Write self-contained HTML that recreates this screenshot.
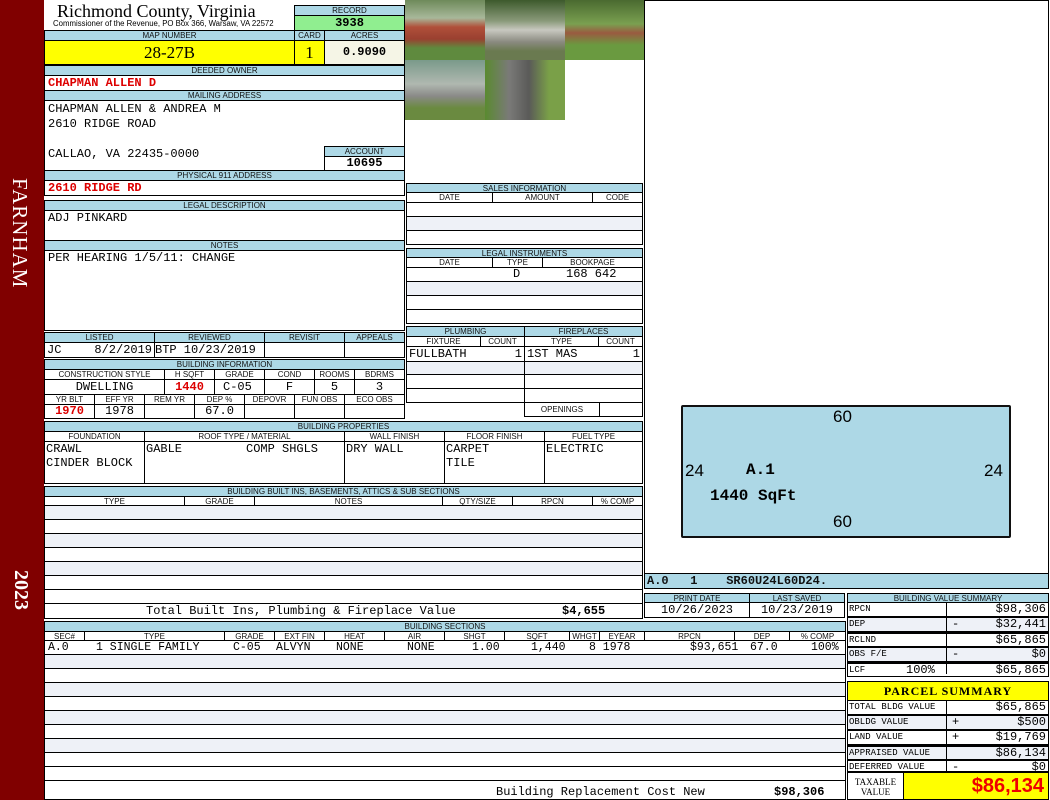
<!DOCTYPE html>
<html><head><meta charset="utf-8"><style>
*{margin:0;padding:0;box-sizing:border-box}
body{width:1050px;height:800px;position:relative;background:#fff;overflow:hidden;font-family:"Liberation Sans",sans-serif}
.c{position:absolute;border:1px solid #000;background:#fff;overflow:hidden;white-space:nowrap}
.l{position:absolute;border:1px solid #000;background:#add8e6;font-size:8px;text-align:center;line-height:9px;overflow:hidden;white-space:nowrap;color:#111}
.m{font-family:"Liberation Mono",monospace;font-size:12px}
.r{color:#d00;font-weight:bold}
.a{background:#eef1f7}
.t{position:absolute;white-space:nowrap}
</style></head><body>
<div style="position:absolute;left:0;top:0;width:44px;height:800px;background:#800000"></div>
<div class="t" style="left:32px;top:178px;transform:rotate(90deg);transform-origin:0 0;color:#fff;font-family:'Liberation Serif',serif;font-size:21px;letter-spacing:1px">FARNHAM</div>
<div class="t" style="left:32px;top:570px;transform:rotate(90deg);transform-origin:0 0;color:#fff;font-family:'Liberation Serif',serif;font-size:20px;font-weight:bold">2023</div>

<div class="t" style="left:57px;top:1px;font-family:'Liberation Serif',serif;font-size:18px">Richmond County, Virginia</div>
<div class="t" style="left:53px;top:19px;font-size:7.8px">Commissioner of the Revenue, PO Box 366, Warsaw, VA 22572</div>
<div class="l" style="left:294px;top:5px;width:111px;height:11px">RECORD</div>
<div class="c m" style="left:294px;top:15px;width:111px;height:16px;background:#90ee90;text-align:center;font-weight:bold;line-height:14px">3938</div>
<div class="l" style="left:44px;top:30px;width:251px;height:11px">MAP NUMBER</div>
<div class="l" style="left:294px;top:30px;width:31px;height:11px">CARD</div>
<div class="l" style="left:324px;top:30px;width:81px;height:11px">ACRES</div>
<div class="c" style="left:44px;top:40px;width:251px;height:25px;background:#ffff00;text-align:center;font-family:'Liberation Serif',serif;font-size:17px;line-height:23px">28-27B</div>
<div class="c" style="left:294px;top:40px;width:31px;height:25px;background:#ffff00;text-align:center;font-family:'Liberation Serif',serif;font-size:17px;line-height:23px">1</div>
<div class="c m" style="left:324px;top:40px;width:81px;height:25px;background:#f5f5e6;text-align:center;font-weight:bold;line-height:23px">0.9090</div>
<div class="l" style="left:44px;top:65px;width:361px;height:11px">DEEDED OWNER</div>
<div class="c m r" style="left:44px;top:75px;width:361px;height:16px;padding-left:3px;line-height:14px">CHAPMAN ALLEN D</div>
<div class="l" style="left:44px;top:90px;width:361px;height:11px">MAILING ADDRESS</div>
<div class="c m" style="left:44px;top:100px;width:361px;height:71px;padding:1px 3px;line-height:15px">CHAPMAN ALLEN &amp; ANDREA M<br>2610 RIDGE ROAD<br><br>CALLAO, VA 22435-0000</div>
<div class="l" style="left:324px;top:146px;width:81px;height:11px">ACCOUNT</div>
<div class="c m" style="left:324px;top:156px;width:81px;height:15px;text-align:center;font-weight:bold;line-height:13px">10695</div>
<div class="l" style="left:44px;top:170px;width:361px;height:11px">PHYSICAL 911 ADDRESS</div>
<div class="c m r" style="left:44px;top:180px;width:361px;height:16px;padding-left:3px;line-height:14px">2610 RIDGE RD</div>
<div class="l" style="left:44px;top:200px;width:361px;height:11px">LEGAL DESCRIPTION</div>
<div class="c m" style="left:44px;top:210px;width:361px;height:31px;padding-left:3px;line-height:15px">ADJ PINKARD</div>
<div class="l" style="left:44px;top:240px;width:361px;height:11px">NOTES</div>
<div class="c m" style="left:44px;top:250px;width:361px;height:81px;padding-left:3px;line-height:15px">PER HEARING 1/5/11: CHANGE</div>

<div class="l" style="left:44px;top:332px;width:111px;height:11px">LISTED</div>
<div class="l" style="left:154px;top:332px;width:111px;height:11px">REVIEWED</div>
<div class="l" style="left:264px;top:332px;width:81px;height:11px">REVISIT</div>
<div class="l" style="left:344px;top:332px;width:61px;height:11px">APPEALS</div>
<div class="c m" style="left:44px;top:342px;width:111px;height:16px;padding:0 2px;line-height:14px">JC<span style="float:right">8/2/2019</span></div>
<div class="c m" style="left:154px;top:342px;width:111px;height:16px;line-height:14px">BTP 10/23/2019</div>
<div class="c" style="left:264px;top:342px;width:81px;height:16px"></div>
<div class="c" style="left:344px;top:342px;width:61px;height:16px"></div>
<div class="l" style="left:44px;top:359px;width:361px;height:11px">BUILDING INFORMATION</div>
<div class="l" style="left:44px;top:369px;width:121px;height:11px;background:#fff">CONSTRUCTION STYLE</div>
<div class="l" style="left:164px;top:369px;width:51px;height:11px;background:#fff">H SQFT</div>
<div class="l" style="left:214px;top:369px;width:51px;height:11px;background:#fff">GRADE</div>
<div class="l" style="left:264px;top:369px;width:51px;height:11px;background:#fff">COND</div>
<div class="l" style="left:314px;top:369px;width:41px;height:11px;background:#fff">ROOMS</div>
<div class="l" style="left:354px;top:369px;width:51px;height:11px;background:#fff">BDRMS</div>
<div class="c m" style="left:44px;top:379px;width:121px;height:16px;text-align:center;line-height:14px">DWELLING</div>
<div class="c m r" style="left:164px;top:379px;width:51px;height:16px;text-align:center;line-height:14px">1440</div>
<div class="c m" style="left:214px;top:379px;width:51px;height:16px;padding-left:8px;line-height:14px">C-05</div>
<div class="c m" style="left:264px;top:379px;width:51px;height:16px;text-align:center;line-height:14px">F</div>
<div class="c m" style="left:314px;top:379px;width:41px;height:16px;text-align:center;line-height:14px">5</div>
<div class="c m" style="left:354px;top:379px;width:51px;height:16px;text-align:center;line-height:14px">3</div>
<div class="l" style="left:44px;top:394px;width:51px;height:11px;background:#fff">YR BLT</div>
<div class="l" style="left:94px;top:394px;width:51px;height:11px;background:#fff">EFF YR</div>
<div class="l" style="left:144px;top:394px;width:51px;height:11px;background:#fff">REM YR</div>
<div class="l" style="left:194px;top:394px;width:51px;height:11px;background:#fff">DEP %</div>
<div class="l" style="left:244px;top:394px;width:51px;height:11px;background:#fff">DEPOVR</div>
<div class="l" style="left:294px;top:394px;width:51px;height:11px;background:#fff">FUN OBS</div>
<div class="l" style="left:344px;top:394px;width:61px;height:11px;background:#fff">ECO OBS</div>
<div class="c m r" style="left:44px;top:404px;width:51px;height:15px;text-align:center;line-height:13px">1970</div>
<div class="c m" style="left:94px;top:404px;width:51px;height:15px;text-align:center;line-height:13px">1978</div>
<div class="c" style="left:144px;top:404px;width:51px;height:15px"></div>
<div class="c m" style="left:194px;top:404px;width:51px;height:15px;text-align:center;line-height:13px">67.0</div>
<div class="c" style="left:244px;top:404px;width:51px;height:15px"></div>
<div class="c" style="left:294px;top:404px;width:51px;height:15px"></div>
<div class="c" style="left:344px;top:404px;width:61px;height:15px"></div>

<div class="c" style="left:405px;top:0;width:80px;height:60px;border:none;background:linear-gradient(#6e8a5a 0,#a8b89a 30%,#b0503a 45%,#9a4030 65%,#5f8a3e 80%)"></div>
<div class="c" style="left:485px;top:0;width:80px;height:60px;border:none;background:linear-gradient(#3d5a2c 0,#8a9a7a 35%,#c8c8c0 50%,#8a8a80 70%,#6a7a50 85%)"></div>
<div class="c" style="left:565px;top:0;width:79px;height:60px;border:none;background:linear-gradient(#4a6a30 0,#7aa050 40%,#9a5a40 55%,#6a9a40 75%)"></div>
<div class="c" style="left:405px;top:60px;width:80px;height:60px;border:none;background:linear-gradient(#7a9a8a 0,#b0b8b0 40%,#8a8a88 60%,#6a8a40 80%)"></div>
<div class="c" style="left:485px;top:60px;width:80px;height:60px;border:none;background:linear-gradient(90deg,#5a8a30,#7a7a78 30%,#5a5a58 55%,#7aa048 80%)"></div>

<div class="l" style="left:406px;top:183px;width:237px;height:10px">SALES INFORMATION</div>
<div class="l" style="left:406px;top:192px;width:87px;height:11px;background:#fff">DATE</div>
<div class="l" style="left:492px;top:192px;width:101px;height:11px;background:#fff">AMOUNT</div>
<div class="l" style="left:592px;top:192px;width:51px;height:11px;background:#fff">CODE</div>
<div class="c" style="left:406px;top:202px;width:237px;height:15px"></div>
<div class="c a" style="left:406px;top:216px;width:237px;height:15px"></div>
<div class="c" style="left:406px;top:230px;width:237px;height:15px"></div>
<div class="l" style="left:406px;top:248px;width:237px;height:10px">LEGAL INSTRUMENTS</div>
<div class="l" style="left:406px;top:257px;width:87px;height:11px;background:#fff">DATE</div>
<div class="l" style="left:492px;top:257px;width:51px;height:11px;background:#fff">TYPE</div>
<div class="l" style="left:542px;top:257px;width:101px;height:11px;background:#fff">BOOKPAGE</div>
<div class="c m" style="left:406px;top:267px;width:237px;height:15px;line-height:13px"><span class="t" style="left:106px">D</span><span class="t" style="left:159px">168 642</span></div>
<div class="c a" style="left:406px;top:281px;width:237px;height:15px"></div>
<div class="c" style="left:406px;top:295px;width:237px;height:15px"></div>
<div class="c" style="left:406px;top:309px;width:237px;height:15px"></div>
<div class="l" style="left:406px;top:326px;width:119px;height:11px">PLUMBING</div>
<div class="l" style="left:524px;top:326px;width:119px;height:11px">FIREPLACES</div>
<div class="l" style="left:406px;top:336px;width:75px;height:11px;background:#fff">FIXTURE</div>
<div class="l" style="left:480px;top:336px;width:45px;height:11px;background:#fff">COUNT</div>
<div class="l" style="left:524px;top:336px;width:75px;height:11px;background:#fff">TYPE</div>
<div class="l" style="left:598px;top:336px;width:45px;height:11px;background:#fff">COUNT</div>
<div class="c m" style="left:406px;top:346px;width:119px;height:16px;padding:0 2px;line-height:15px">FULLBATH<span style="float:right">1</span></div>
<div class="c m" style="left:524px;top:346px;width:119px;height:16px;padding:0 2px;line-height:15px">1ST MAS<span style="float:right">1</span></div>
<div class="c a" style="left:406px;top:361px;width:119px;height:14px"></div>
<div class="c a" style="left:524px;top:361px;width:119px;height:14px"></div>
<div class="c" style="left:406px;top:374px;width:119px;height:15px"></div>
<div class="c" style="left:524px;top:374px;width:119px;height:15px"></div>
<div class="c" style="left:406px;top:388px;width:119px;height:15px"></div>
<div class="c" style="left:524px;top:388px;width:119px;height:15px"></div>
<div class="l" style="left:524px;top:402px;width:76px;height:15px;background:#fff;line-height:13px">OPENINGS</div>
<div class="c" style="left:599px;top:402px;width:44px;height:15px"></div>

<div class="l" style="left:44px;top:421px;width:599px;height:11px">BUILDING PROPERTIES</div>
<div class="l" style="left:44px;top:431px;width:101px;height:11px;background:#fff">FOUNDATION</div>
<div class="l" style="left:144px;top:431px;width:201px;height:11px;background:#fff">ROOF TYPE / MATERIAL</div>
<div class="l" style="left:344px;top:431px;width:101px;height:11px;background:#fff">WALL FINISH</div>
<div class="l" style="left:444px;top:431px;width:101px;height:11px;background:#fff">FLOOR FINISH</div>
<div class="l" style="left:544px;top:431px;width:99px;height:11px;background:#fff">FUEL TYPE</div>
<div class="c m" style="left:44px;top:441px;width:101px;height:43px;padding-left:1px;line-height:14px">CRAWL<br>CINDER BLOCK</div>
<div class="c m" style="left:144px;top:441px;width:201px;height:43px;padding-left:1px;line-height:14px">GABLE<span class="t" style="left:101px">COMP SHGLS</span></div>
<div class="c m" style="left:344px;top:441px;width:101px;height:43px;padding-left:1px;line-height:14px">DRY WALL</div>
<div class="c m" style="left:444px;top:441px;width:101px;height:43px;padding-left:1px;line-height:14px">CARPET<br>TILE</div>
<div class="c m" style="left:544px;top:441px;width:99px;height:43px;padding-left:1px;line-height:14px">ELECTRIC</div>
<div class="l" style="left:44px;top:486px;width:599px;height:11px">BUILDING BUILT INS, BASEMENTS, ATTICS &amp; SUB SECTIONS</div>
<div class="l" style="left:44px;top:496px;width:141px;height:10px;background:#fff">TYPE</div>
<div class="l" style="left:184px;top:496px;width:71px;height:10px;background:#fff">GRADE</div>
<div class="l" style="left:254px;top:496px;width:189px;height:10px;background:#fff">NOTES</div>
<div class="l" style="left:442px;top:496px;width:71px;height:10px;background:#fff">QTY/SIZE</div>
<div class="l" style="left:512px;top:496px;width:81px;height:10px;background:#fff">RPCN</div>
<div class="l" style="left:592px;top:496px;width:51px;height:10px;background:#fff">% COMP</div>
<div class="c a" style="left:44px;top:505px;width:599px;height:15px"></div>
<div class="c" style="left:44px;top:519px;width:599px;height:15px"></div>
<div class="c a" style="left:44px;top:533px;width:599px;height:15px"></div>
<div class="c" style="left:44px;top:547px;width:599px;height:15px"></div>
<div class="c a" style="left:44px;top:561px;width:599px;height:15px"></div>
<div class="c" style="left:44px;top:575px;width:599px;height:15px"></div>
<div class="c" style="left:44px;top:589px;width:599px;height:15px"></div>
<div class="c m" style="left:44px;top:603px;width:599px;height:16px;line-height:15px"><span class="t" style="left:101px">Total Built Ins, Plumbing &amp; Fireplace Value</span><span class="t" style="left:517px;font-weight:bold">$4,655</span></div>

<div class="l" style="left:44px;top:621px;width:802px;height:11px">BUILDING SECTIONS</div>
<div class="l" style="left:44px;top:631px;width:41px;height:10px;background:#fff">SEC#</div>
<div class="l" style="left:84px;top:631px;width:141px;height:10px;background:#fff">TYPE</div>
<div class="l" style="left:224px;top:631px;width:51px;height:10px;background:#fff">GRADE</div>
<div class="l" style="left:274px;top:631px;width:51px;height:10px;background:#fff">EXT FIN</div>
<div class="l" style="left:324px;top:631px;width:61px;height:10px;background:#fff">HEAT</div>
<div class="l" style="left:384px;top:631px;width:61px;height:10px;background:#fff">AIR</div>
<div class="l" style="left:444px;top:631px;width:61px;height:10px;background:#fff">SHGT</div>
<div class="l" style="left:504px;top:631px;width:66px;height:10px;background:#fff">SQFT</div>
<div class="l" style="left:569px;top:631px;width:31px;height:10px;background:#fff">WHGT</div>
<div class="l" style="left:599px;top:631px;width:46px;height:10px;background:#fff">EYEAR</div>
<div class="l" style="left:644px;top:631px;width:91px;height:10px;background:#fff">RPCN</div>
<div class="l" style="left:734px;top:631px;width:56px;height:10px;background:#fff">DEP</div>
<div class="l" style="left:789px;top:631px;width:57px;height:10px;background:#fff">% COMP</div>
<div class="c m" style="left:44px;top:640px;width:802px;height:15px;line-height:14px;font-size:11.5px">
<span class="t" style="left:3px">A.0</span><span class="t" style="left:51px">1 SINGLE FAMILY</span><span class="t" style="left:188px">C-05</span><span class="t" style="left:231px">ALVYN</span><span class="t" style="left:291px">NONE</span><span class="t" style="left:362px">NONE</span><span class="t" style="left:427px">1.00</span><span class="t" style="left:486px">1,440</span><span class="t" style="left:544px">8 1978</span><span class="t" style="left:645px">$93,651</span><span class="t" style="left:705px">67.0</span><span class="t" style="left:766px">100%</span></div>
<div class="c a" style="left:44px;top:654px;width:802px;height:15px"></div>
<div class="c" style="left:44px;top:668px;width:802px;height:15px"></div>
<div class="c a" style="left:44px;top:682px;width:802px;height:15px"></div>
<div class="c" style="left:44px;top:696px;width:802px;height:15px"></div>
<div class="c a" style="left:44px;top:710px;width:802px;height:15px"></div>
<div class="c" style="left:44px;top:724px;width:802px;height:15px"></div>
<div class="c a" style="left:44px;top:738px;width:802px;height:15px"></div>
<div class="c" style="left:44px;top:752px;width:802px;height:15px"></div>
<div class="c" style="left:44px;top:766px;width:802px;height:15px"></div>
<div class="c m" style="left:44px;top:780px;width:802px;height:20px;line-height:22px"><span class="t" style="left:451px">Building Replacement Cost New</span><span class="t" style="left:729px;font-weight:bold">$98,306</span></div>

<div class="c" style="left:644px;top:0;width:405px;height:574px"></div>
<div style="position:absolute;left:681px;top:405px;width:330px;height:133px;background:#add8e6;border:2px solid #111;border-radius:2px"></div>
<div class="t" style="left:833px;top:407px;font-size:17px">60</div>
<div class="t" style="left:833px;top:512px;font-size:17px">60</div>
<div class="t" style="left:685px;top:461px;font-size:17px">24</div>
<div class="t" style="left:984px;top:461px;font-size:17px">24</div>
<div class="t" style="left:746px;top:461px;font-family:'Liberation Mono',monospace;font-weight:bold;font-size:16px">A.1</div>
<div class="t" style="left:710px;top:487px;font-family:'Liberation Mono',monospace;font-weight:bold;font-size:16px">1440 SqFt</div>
<div class="l m" style="left:644px;top:573px;width:405px;height:16px;font-size:12px;text-align:left;line-height:14px;font-weight:bold;padding-left:2px">A.0&nbsp;&nbsp;&nbsp;1&nbsp;&nbsp;&nbsp;&nbsp;SR60U24L60D24.</div>

<div class="l" style="left:644px;top:593px;width:106px;height:10px">PRINT DATE</div>
<div class="l" style="left:749px;top:593px;width:96px;height:10px">LAST SAVED</div>
<div class="c m" style="left:644px;top:602px;width:106px;height:16px;text-align:center;line-height:14px">10/26/2023</div>
<div class="c m" style="left:749px;top:602px;width:96px;height:16px;text-align:center;line-height:14px">10/23/2019</div>

<div class="l" style="left:847px;top:593px;width:202px;height:10px">BUILDING VALUE SUMMARY</div>
<div style="position:absolute;left:847px;top:602px;width:202px;font-family:'Liberation Mono',monospace">
<div class="c" style="position:relative;height:15px;font-size:9px;line-height:13px;padding-left:1px">RPCN<span class="m" style="position:absolute;right:2px">$98,306</span></div>
<div class="c a" style="position:relative;height:15px;font-size:9px;line-height:13px;padding-left:1px">DEP<span class="m" style="position:absolute;left:104px">-</span><span class="m" style="position:absolute;right:2px">$32,441</span></div>
<div class="c" style="position:relative;height:15px;font-size:9px;line-height:13px;padding-left:1px;border-top-width:2px">RCLND<span class="m" style="position:absolute;right:2px">$65,865</span></div>
<div class="c a" style="position:relative;height:15px;font-size:9px;line-height:13px;padding-left:1px">OBS F/E<span class="m" style="position:absolute;left:104px">-</span><span class="m" style="position:absolute;right:2px">$0</span></div>
<div class="c" style="position:relative;height:15px;font-size:9px;line-height:13px;padding-left:1px;border-top-width:2px">LCF<span class="m" style="position:absolute;left:58px">100%</span><span class="m" style="position:absolute;right:2px">$65,865</span></div>
</div>
<div style="position:absolute;left:946px;top:602px;width:1px;height:72px;background:#000"></div>

<div class="c" style="left:847px;top:681px;width:202px;height:20px;background:#ffff00;text-align:center;font-family:'Liberation Serif',serif;font-weight:bold;font-size:12px;line-height:18px;letter-spacing:1px">PARCEL SUMMARY</div>
<div style="position:absolute;left:847px;top:700px;width:202px;font-family:'Liberation Mono',monospace">
<div class="c" style="position:relative;height:15px;font-size:9px;line-height:13px;padding-left:1px">TOTAL BLDG VALUE<span class="m" style="position:absolute;right:2px">$65,865</span></div>
<div class="c a" style="position:relative;height:15px;font-size:9px;line-height:13px;padding-left:1px">OBLDG VALUE<span class="m" style="position:absolute;left:104px">+</span><span class="m" style="position:absolute;right:2px">$500</span></div>
<div class="c" style="position:relative;height:15px;font-size:9px;line-height:13px;padding-left:1px">LAND VALUE<span class="m" style="position:absolute;left:104px">+</span><span class="m" style="position:absolute;right:2px">$19,769</span></div>
<div class="c a" style="position:relative;height:15px;font-size:9px;line-height:13px;padding-left:1px;border-top-width:2px">APPRAISED VALUE<span class="m" style="position:absolute;right:2px">$86,134</span></div>
<div class="c" style="position:relative;height:15px;font-size:9px;line-height:13px;padding-left:1px">DEFERRED VALUE<span class="m" style="position:absolute;left:104px">-</span><span class="m" style="position:absolute;right:2px">$0</span></div>
</div>
<div style="position:absolute;left:946px;top:700px;width:1px;height:72px;background:#000"></div>
<div class="c" style="left:847px;top:771px;width:57px;height:29px;font-family:'Liberation Serif',serif;font-size:9px;text-align:center;line-height:10px;padding-top:4px;border-top-width:2px">TAXABLE<br>VALUE</div>
<div class="c" style="left:903px;top:771px;width:146px;height:29px;background:#ffff00;color:#e00;font-weight:bold;font-size:20px;text-align:right;padding-right:4px;line-height:27px;border-top-width:2px">$86,134</div>
</body></html>
